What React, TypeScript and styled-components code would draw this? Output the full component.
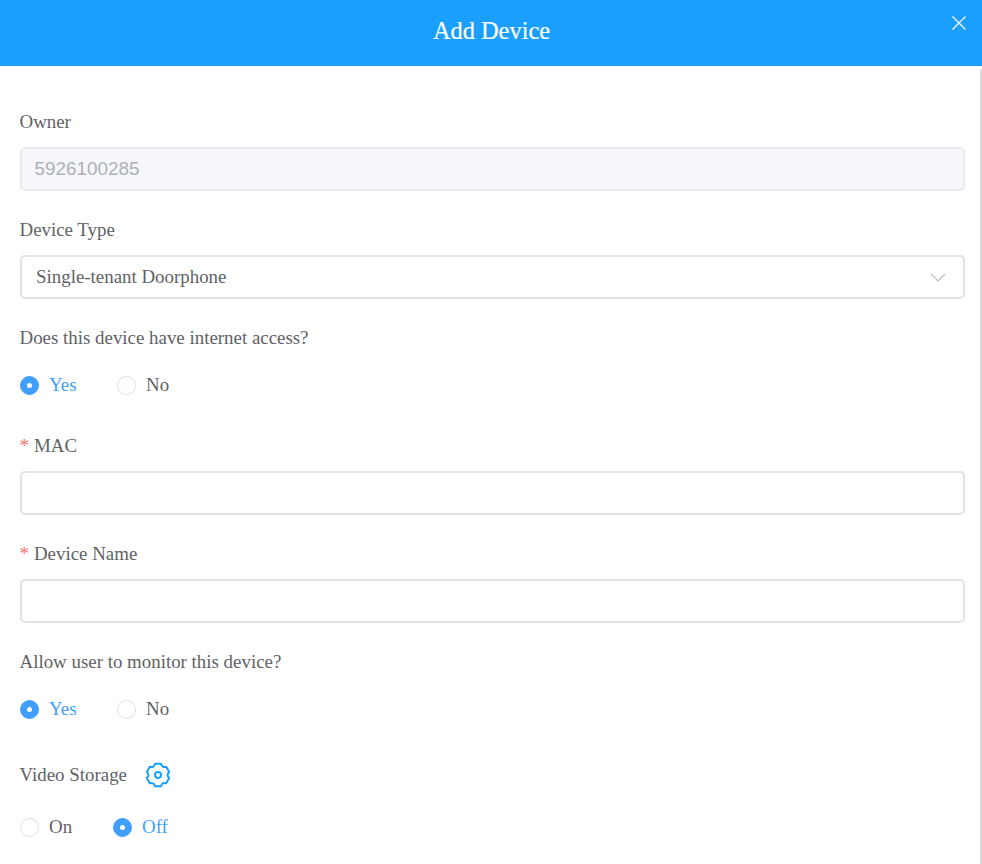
import React from "react";
import styled, { createGlobalStyle } from "styled-components";

const GlobalStyle = createGlobalStyle`
  html, body {
    margin: 0;
    padding: 0;
    height: 100%;
    overflow: hidden;
    background: #fff;
  }
`;

function CloseIcon() {
  return (
    <svg width="16" height="16" viewBox="0 0 16 16" fill="none" stroke="#fff" strokeWidth="1.2">
      <path d="M1.5 1.5 L14.5 14.5 M14.5 1.5 L1.5 14.5" />
    </svg>
  );
}

function ChevronIcon() {
  return (
    <svg width="16" height="9" viewBox="0 0 16 9" fill="none" stroke="#b8bbc2" strokeWidth="1.1">
      <path d="M1 1 L8 8 L15 1" />
    </svg>
  );
}

// six teeth, one pointing straight up
function gearPath() {
  const pt = (deg: number, r: number) => {
    const a = (deg * Math.PI) / 180;
    return `${(13 + r * Math.cos(a)).toFixed(2)} ${(13 + r * Math.sin(a)).toFixed(2)}`;
  };
  let d = "";
  for (let i = 0; i < 6; i++) {
    const a = -90 + i * 60;
    d += `${i === 0 ? "M" : "L"}${pt(a - 15, 11.6)} L${pt(a + 15, 11.6)} Q${pt(a + 30, 8)} `;
    d += `${pt(a + 45, 11.6)} `;
  }
  return d + "Z";
}

function GearIcon() {
  return (
    <svg width="26" height="26" viewBox="0 0 26 26" fill="none" stroke="#1a9fff" strokeWidth="2" strokeLinejoin="round">
      <path d={gearPath()} />
      <circle cx="13" cy="13" r="3" />
    </svg>
  );
}

function Radio({ label, checked, width }: { label: string; checked?: boolean; width: number }) {
  return (
    <RadioItem $width={width}>
      <RadioDot $checked={checked} />
      <RadioLabel $checked={checked}>{label}</RadioLabel>
    </RadioItem>
  );
}

export default function App() {
  return (
    <Dialog>
      <GlobalStyle />
      <Header>
        <Title>Add Device</Title>
        <CloseButton>
          <CloseIcon />
        </CloseButton>
      </Header>
      <Body>
        <FormItem>
          <Label>Owner</Label>
          <DisabledField>5926100285</DisabledField>
        </FormItem>
        <FormItem>
          <Label>Device Type</Label>
          <Field>
            <span>Single-tenant Doorphone</span>
            <ChevronIcon />
          </Field>
        </FormItem>
        <FormItem>
          <Label>Does this device have internet access?</Label>
          <RadioGroup>
            <Radio label="Yes" checked width={97} />
            <Radio label="No" width={80} />
          </RadioGroup>
        </FormItem>
        <FormItem>
          <Label>
            <Star>*</Star>MAC
          </Label>
          <Field />
        </FormItem>
        <FormItem>
          <Label>
            <Star>*</Star>Device Name
          </Label>
          <Field />
        </FormItem>
        <FormItem>
          <Label>Allow user to monitor this device?</Label>
          <RadioGroup>
            <Radio label="Yes" checked width={97} />
            <Radio label="No" width={80} />
          </RadioGroup>
        </FormItem>
        <VideoItem>
          <VideoLabel>
            <Label>Video Storage</Label>
            <GearIcon />
          </VideoLabel>
          <RadioGroup>
            <Radio label="On" width={93} />
            <Radio label="Off" checked width={80} />
          </RadioGroup>
        </VideoItem>
      </Body>
      <ScrollThumb />
    </Dialog>
  );
}

const Dialog = styled.div`
  position: relative;
  width: 982px;
  height: 864px;
  overflow: hidden;
  background: #fff;
  color: #606266;
  font-family: "Liberation Serif", "Times New Roman", serif;
  font-size: 18.9px;
`;

const Header = styled.header`
  position: relative;
  height: 66px;
  box-sizing: border-box;
  padding: 0 0 5px 1px;
  background: #1a9fff;
  display: flex;
  align-items: center;
  justify-content: center;
`;

const Title = styled.h1`
  margin: 0;
  color: #fff;
  font-size: 24.4px;
  font-weight: 400;
  -webkit-text-stroke: 0.2px #fff;
`;

const CloseButton = styled.div`
  position: absolute;
  top: 15px;
  right: 15px;
  width: 16px;
  height: 16px;
  line-height: 0;
`;

const Body = styled.main`
  padding: 36px 17px 0 20px;
`;

const FormItem = styled.section`
  margin-bottom: 19px;
`;

const VideoItem = styled.section`
  margin-top: 24px;
`;

const VideoLabel = styled.div`
  display: flex;
  align-items: center;
  gap: 18px;
  margin-bottom: 10px;
`;

const Label = styled.div`
  height: 40px;
  line-height: 40px;
  margin-left: -0.5px;
  margin-bottom: 5px;
  ${VideoLabel} & {
    margin-bottom: 0;
  }
`;

const Star = styled.span`
  color: #fb6f6f;
  margin-right: 5px;
`;

const Field = styled.div`
  box-sizing: border-box;
  height: 44px;
  padding: 0 17px 0 14px;
  display: flex;
  align-items: center;
  justify-content: space-between;
  background: #fff;
  border: 2px solid #e0e2ea;
  border-radius: 5px;
`;

const DisabledField = styled(Field)`
  background: #f5f7fa;
  border-color: #e8eaf0;
  color: #aeb0b6;
  padding-left: 12.5px;
  font-family: "Liberation Sans", Arial, sans-serif;
  font-size: 18.9px;
`;

const RadioGroup = styled.div`
  display: flex;
  height: 44px;
`;

const RadioItem = styled.label<{ $width: number }>`
  display: flex;
  align-items: center;
  gap: 10px;
  width: ${(p) => p.$width}px;
`;

const RadioDot = styled.span<{ $checked?: boolean }>`
  box-sizing: border-box;
  width: 19px;
  height: 19px;
  border-radius: 50%;
  display: flex;
  align-items: center;
  justify-content: center;
  background: ${(p) => (p.$checked ? "#409eff" : "#fff")};
  border: 1px solid ${(p) => (p.$checked ? "#409eff" : "#dcdfe6")};
  &::after {
    content: "";
    width: 5px;
    height: 5px;
    border-radius: 50%;
    background: #fff;
  }
`;

const RadioLabel = styled.span<{ $checked?: boolean }>`
  color: ${(p) => (p.$checked ? "#409eff" : "#606266")};
`;

const ScrollThumb = styled.div`
  position: absolute;
  top: 69px;
  right: 0;
  bottom: 0;
  width: 2px;
  background: #d8d8d8;
  border-radius: 2px 0 0 0;
`;
